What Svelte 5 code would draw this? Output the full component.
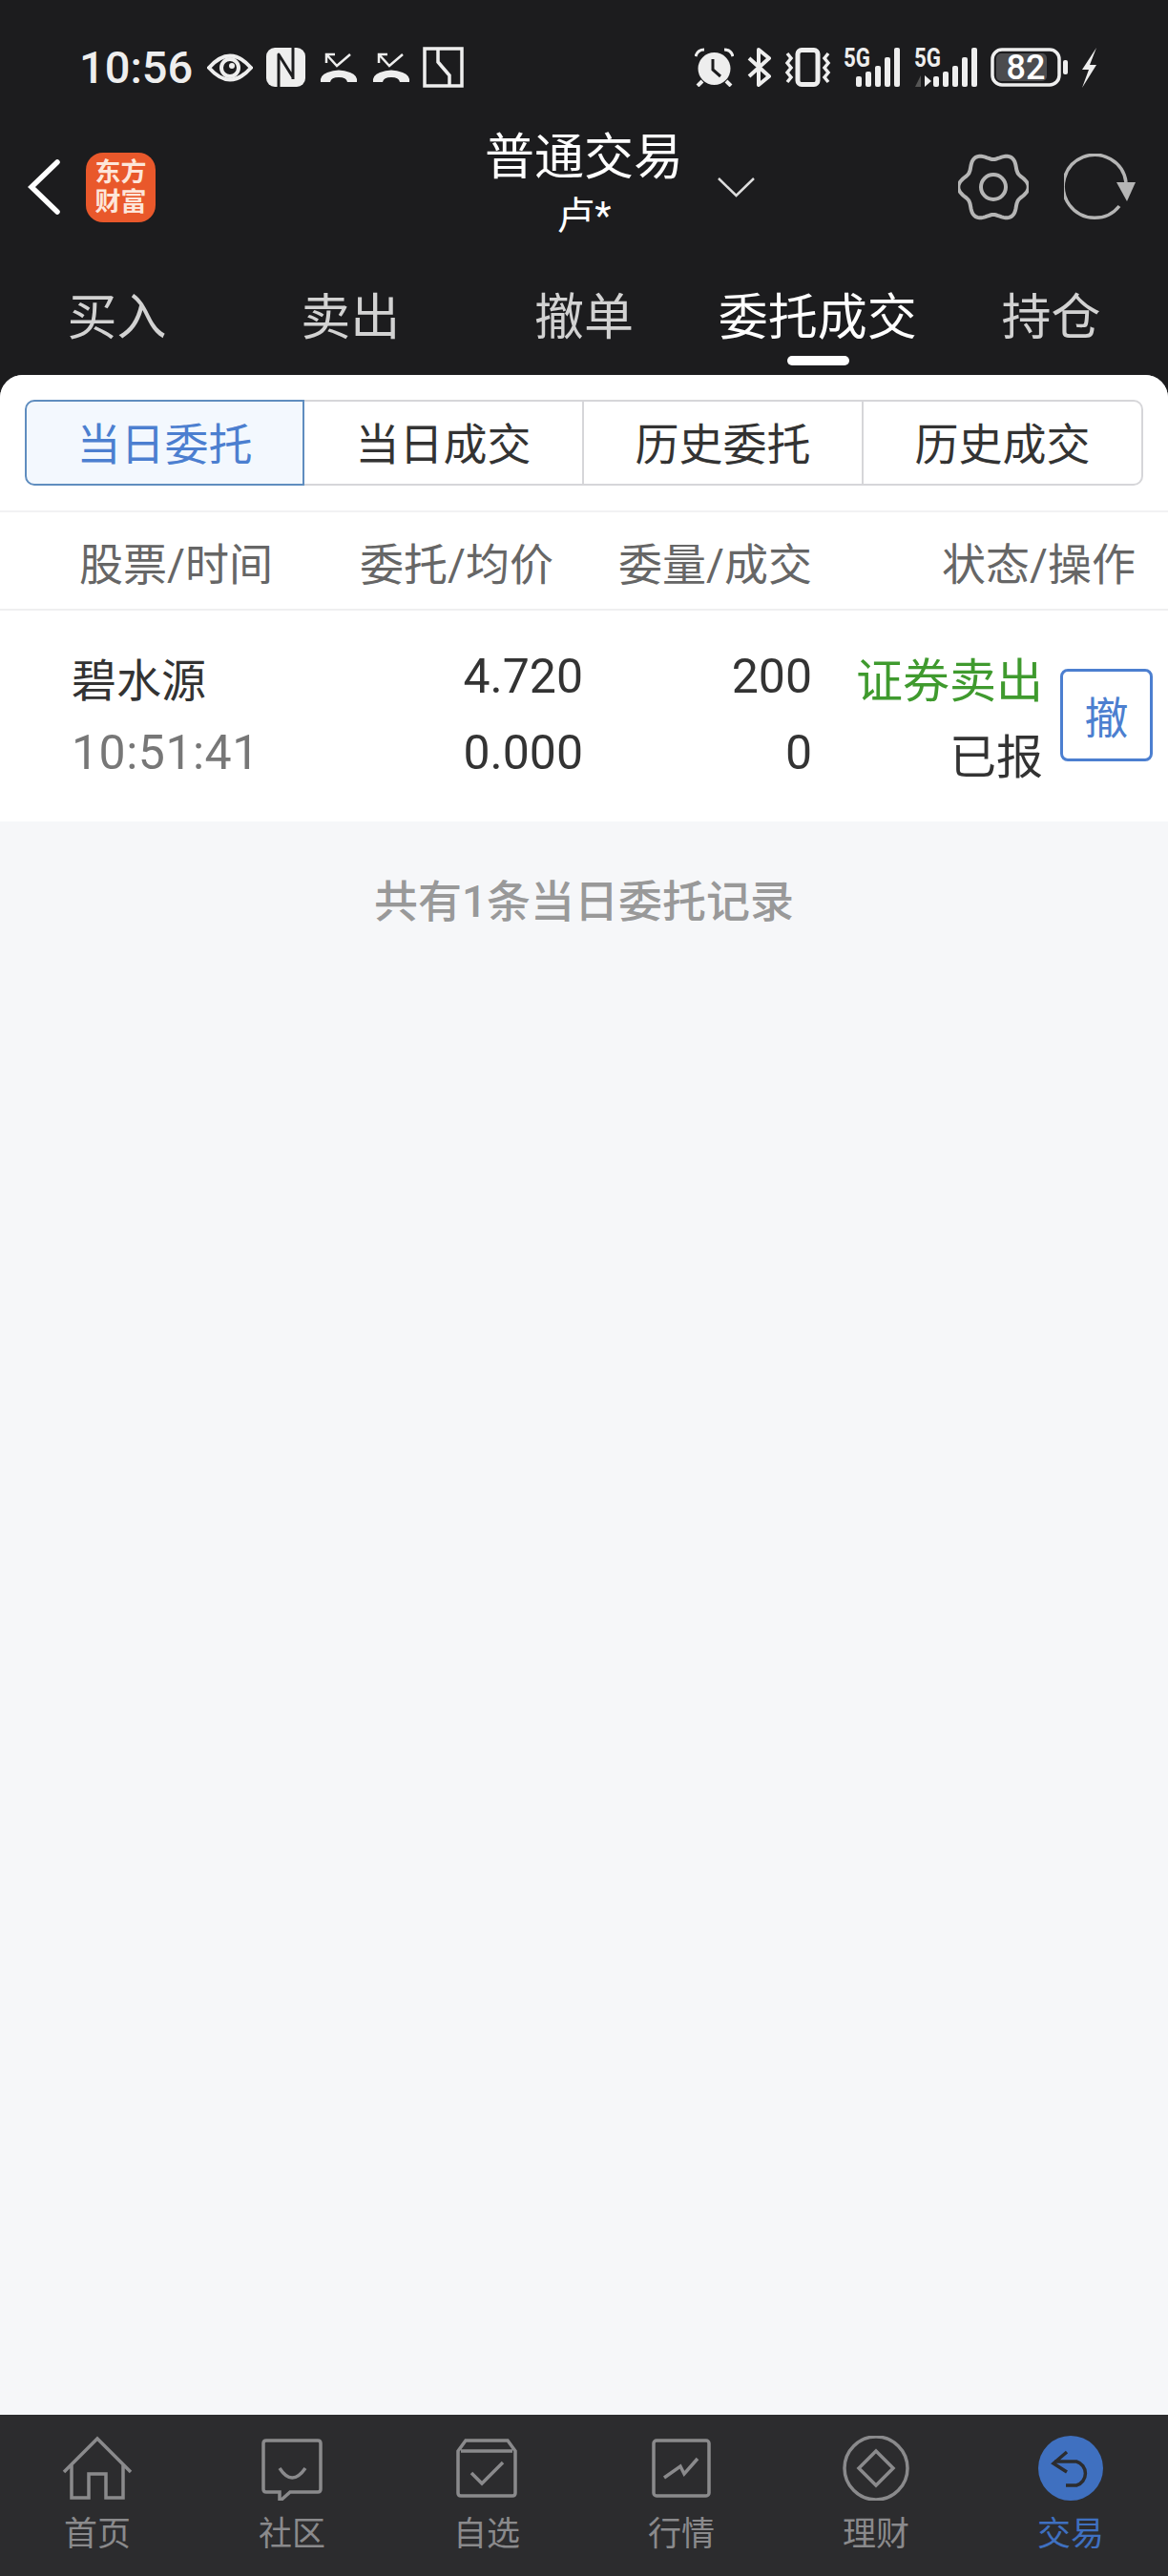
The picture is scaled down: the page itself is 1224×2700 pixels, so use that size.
<script>
	const tabs = ['买入', '卖出', '撤单', '委托成交', '持仓'];
	const segments = ['当日委托', '当日成交', '历史委托', '历史成交'];
	const columns = ['股票/时间', '委托/均价', '委量/成交', '状态/操作'];
	const orders = [
		{ name: '碧水源', time: '10:51:41', price: '4.720', avg: '0.000', qty: '200', done: '0', side: '证券卖出', status: '已报' }
	];
	const nav = ['首页', '社区', '自选', '行情', '理财', '交易'];

	// six lobed outline for the settings icon
	function gearPath() {
		let d = '';
		for (let i = 0; i <= 120; i++) {
			const a = (i / 120) * Math.PI * 2;
			const r = 32.5 + 3.5 * Math.cos(6 * a - Math.PI);
			const x = 37 + r * 1.02 * Math.sin(a);
			const y = 35 - r * Math.cos(a);
			d += (i ? 'L' : 'M') + x.toFixed(1) + ' ' + y.toFixed(1);
		}
		return d + 'Z';
	}
	const bars = [
		[16, 11],
		[26, 16],
		[36, 22],
		[46, 31],
		[56, 41]
	];
</script>

<div class="app">
	<header class="top">
		<div class="status">
			<div class="status-left">
				<span class="clock">10:56</span>
				<svg class="ic-eye" width="48" height="32" viewBox="0 0 48 32">
					<path d="M2 16Q24-9 46 16 24 41 2 16Z" fill="none" stroke="#eee" stroke-width="4" />
					<circle cx="24" cy="16" r="9" fill="none" stroke="#eee" stroke-width="4" />
					<circle cx="26" cy="14" r="3" fill="#eee" />
				</svg>
				<svg class="ic-nfc" width="41" height="41" viewBox="0 0 41 41">
					<rect width="41" height="41" rx="9" fill="#eee" />
					<path d="M13 41V7L28 31M28 0V33" fill="none" stroke="#1c1c1e" stroke-width="3" stroke-linejoin="round" />
				</svg>
				{#each [0, 1] as i}
					<svg class="ic-call" width="40" height="32" viewBox="0 0 40 32">
						<path d="M16 2H7V11M7 2L18 14 32 2" fill="none" stroke="#eee" stroke-width="2.500" />
						<path d="M1 31Q0 24 8 21 20 16 32 21 40 24 39 31L29 31Q28 26 20 26 12 26 11 31Z" fill="#eee" />
					</svg>
				{/each}
				<svg class="ic-box" width="43" height="43" viewBox="0 0 43 43">
					<path d="M2 2H41V41H2ZM16 2V16L28 30V41" fill="none" stroke="#eee" stroke-width="3.500" />
				</svg>
			</div>
			<div class="status-right">
				<svg width="41" height="41" viewBox="0 0 41 41">
					<circle cx="20.500" cy="22" r="17" fill="#eee" />
					<path d="M19 12V23L27 30" fill="none" stroke="#1c1c1e" stroke-width="3" />
					<path d="M1 9Q3 2 10 2M40 9Q38 2 31 2" fill="none" stroke="#eee" stroke-width="3" />
					<path d="M8 35L3 40M33 35L38 40" stroke="#eee" stroke-width="4" />
				</svg>
				<svg width="27" height="41" viewBox="0 0 27 41">
					<path d="M3 11L24 30 13 39V2L24 11 3 30" fill="none" stroke="#eee" stroke-width="4" stroke-linejoin="round" />
				</svg>
				<svg width="49" height="41" viewBox="0 0 49 41">
					<rect x="14" y="2.500" width="21" height="36" rx="4" fill="none" stroke="#eee" stroke-width="5" />
					<path d="M3 6L7 11 3 16 7 21 3 26 7 31 3 36M46 6L42 11 46 16 42 21 46 26 42 31 46 36" fill="none" stroke="#eee" stroke-width="3.500" />
				</svg>
				<svg class="open" width="61" height="41" viewBox="0 0 61 41">
					<text class="net" x="0" y="20" textLength="28" lengthAdjust="spacingAndGlyphs">5G</text>
					{#each bars as b}
						<rect x={b[0] - 3} y={41 - b[1]} width="6" height={b[1]} rx="2" fill="#eee" />
					{/each}
				</svg>
				<svg class="open" width="67" height="41" viewBox="0 0 67 41">
					<text class="net" x="0" y="20" textLength="28" lengthAdjust="spacingAndGlyphs">5G</text>
					<path d="M7 29V41H1Z" fill="#555" />
					<path d="M11 29V41L18 35Z" fill="#eee" />
					{#each bars as b}
						<rect x={b[0] + 4} y={41 - b[1]} width="6" height={b[1]} rx="2" fill="#eee" />
					{/each}
				</svg>
				<svg width="82" height="41" viewBox="0 0 82 41">
					<rect x="6" y="6" width="53" height="29" rx="5" fill="#4c4c4e" />
					<rect x="2" y="2" width="70" height="37" rx="10" fill="none" stroke="#eee" stroke-width="3.500" />
					<rect x="76" y="13" width="5" height="15" rx="2" fill="#eee" />
					<text class="batt" x="37" y="33" text-anchor="middle">82</text>
				</svg>
				<svg width="17" height="42" viewBox="0 0 17 42">
					<path d="M16 0L1 23H8L1 42 16 18H9Z" fill="#eee" />
				</svg>
			</div>
		</div>

		<div class="bar">
			<div class="bar-left">
				<svg width="34" height="58" viewBox="0 0 34 58">
					<path d="M31 3L4 29 31 55" fill="none" stroke="#fff" stroke-width="5.500" stroke-linecap="round" />
				</svg>
				<div class="logo">东方<br />财富</div>
			</div>
			<div class="title">
				<div class="title-main">普通交易</div>
				<div class="title-sub">卢*</div>
			</div>
			<div class="bar-right">
				<svg class="chev" width="39" height="22" viewBox="0 0 39 22">
					<path d="M1 2L19.500 20 38 2" fill="none" stroke="#ddd" stroke-width="2.500" />
				</svg>
				<svg class="gear" width="74" height="70" viewBox="0 0 74 70">
					<path d={gearPath()} fill="none" stroke="#b5b5b5" stroke-width="4" />
					<circle cx="37" cy="35" r="13" fill="none" stroke="#b5b5b5" stroke-width="4" />
				</svg>
				<svg width="76" height="70" viewBox="0 0 76 70">
					<path d="M65 30A33 33 0 1 0 58 55" fill="none" stroke="#b5b5b5" stroke-width="3.500" />
					<path d="M55 30H75L66 50Z" fill="#b5b5b5" />
				</svg>
			</div>
		</div>

		<nav class="tabs">
			{#each tabs as tab, i}
				<div class="tab" class:on={i === 3}>{tab}</div>
			{/each}
		</nav>
	</header>

	<main class="body">
		<section class="card">
			<div class="segments">
				{#each segments as seg, i}
					<div class="seg" class:on={i === 0}>{seg}</div>
				{/each}
			</div>
			<div class="head">
				{#each columns as col}
					<span>{col}</span>
				{/each}
			</div>
			{#each orders as o}
				<div class="row">
					<span class="name">{o.name}</span>
					<span class="num">{o.price}</span>
					<span class="num">{o.qty}</span>
					<span class="side">{o.side}</span>
					<button class="cancel">撤</button>
					<span class="time">{o.time}</span>
					<span class="num">{o.avg}</span>
					<span class="num">{o.done}</span>
					<span class="state">{o.status}</span>
				</div>
			{/each}
		</section>
		<p class="count">共有1条当日委托记录</p>
	</main>

	<footer class="nav">
		{#each nav as item, i}
			<div class="nav-item" class:on={i === 5}>
				<svg width="80" height="68" viewBox="0 0 80 68">
					{#if i === 0}
						<path d="M5 38L40 3 75 38M13 30V65H31V40H49V65H67V30" class="ln" />
					{:else if i === 1}
						<path d="M13 5H67Q70 5 70 8V56Q70 59 67 59H38L29 67H27V59H13Q10 59 10 56V8Q10 5 13 5Z" class="ln" />
						<path d="M27 34Q40 54 54 34" class="ln" />
					{:else if i === 2}
						<path d="M13 16H67M18 5H62L70 16V60Q70 63 67 63H13Q10 63 10 60V16ZM24 39L35 50 57 28" class="ln" />
					{:else if i === 3}
						<rect x="11" y="5" width="58" height="58" rx="3" class="ln" />
						<path d="M22 44L39 32 43 40 57 24" class="ln" />
					{:else if i === 4}
						<circle cx="40" cy="34" r="33" class="ln" />
						<path d="M40 16L58 34 40 52 22 34Z" class="ln" />
					{:else}
						<circle cx="40" cy="34" r="34" fill="#3f70c0" />
						<path d="M36 17L22 29 36 38M23 27H46A13 13 0 0 1 46 52H35" fill="none" stroke="#2c2c2e" stroke-width="3.500" />
					{/if}
				</svg>
				<span>{item}</span>
			</div>
		{/each}
	</footer>
</div>

<style>
	:global(body) {
		margin: 0;
	}

	.app {
		width: 1224px;
		height: 2700px;
		display: flex;
		flex-direction: column;
		background: #1c1c1e;
		font-family: Roboto, 'Noto Sans CJK SC', sans-serif;
		overflow: hidden;
	}

	.top {
		flex-shrink: 0;
		height: 393px;
		color: #fff;
	}

	.status {
		height: 43px;
		padding: 49px 74px 43px 83px;
		display: flex;
		align-items: center;
		justify-content: space-between;
	}

	.status-left,
	.status-right {
		display: flex;
		align-items: center;
	}

	.status-right {
		gap: 13px;
	}

	.open {
		overflow: visible;
	}

	.clock {
		width: 118px;
		font-size: 47px;
		font-weight: 500;
		line-height: 43px;
		color: #eee;
		white-space: nowrap;
	}

	.ic-eye {
		margin-left: 16px;
	}

	.ic-nfc {
		margin-left: 14px;
	}

	.ic-call {
		margin-left: 15px;
	}

	.ic-box {
		margin-left: 13px;
	}

	.net {
		font-size: 27px;
		font-weight: 700;
		fill: #eee;
	}

	.batt {
		font-size: 36px;
		font-weight: 500;
		fill: #fff;
	}

	.bar {
		height: 122px;
		display: grid;
		grid-template-columns: 1fr auto 1fr;
		align-items: center;
	}

	.bar-left {
		display: flex;
		align-items: center;
		gap: 27px;
		padding-left: 29px;
	}

	.logo {
		width: 73px;
		height: 73px;
		border-radius: 18px;
		background: #e9582b;
		color: #fde6da;
		font-size: 27px;
		font-weight: 700;
		line-height: 31px;
		text-align: center;
		padding-top: 6px;
		box-sizing: border-box;
		white-space: nowrap;
	}

	.title {
		text-align: center;
	}

	.title-main {
		font-size: 52px;
		line-height: 62px;
	}

	.title-sub {
		font-size: 40px;
		line-height: 60px;
	}

	.bar-right {
		display: flex;
		align-items: center;
		padding-right: 33px;
	}

	.chev {
		margin-left: 36px;
		margin-right: auto;
	}

	.gear {
		margin-right: 37px;
	}

	.tabs {
		display: flex;
		height: 136px;
	}

	.tab {
		flex: 1;
		position: relative;
		padding-top: 48px;
		text-align: center;
		font-size: 52px;
		line-height: 58px;
		color: #d2d2d2;
	}

	.tab.on {
		color: #fff;
	}

	.tab.on::after {
		content: '';
		position: absolute;
		left: 50%;
		top: 116px;
		width: 65px;
		height: 10px;
		margin-left: -32px;
		border-radius: 5px;
		background: #fff;
	}

	.body {
		flex: 1;
		background: #f6f7f9;
		border-radius: 24px 24px 0 0;
		overflow: hidden;
	}

	.card {
		background: #fff;
	}

	.segments {
		display: grid;
		grid-template-columns: repeat(4, 1fr);
		margin: 0 26px 0 26px;
		padding-top: 26px;
		padding-bottom: 26px;
	}

	.seg {
		height: 90px;
		box-sizing: border-box;
		border: 2px solid #d6d6d9;
		border-left-width: 0;
		font-size: 46px;
		line-height: 90px;
		text-align: center;
		color: #333;
	}

	.seg:last-child {
		border-radius: 0 10px 10px 0;
	}

	.seg.on {
		border: 2px solid #5f8dbf;
		border-radius: 10px 0 0 10px;
		background: #f3f8fe;
		color: #4c7fd0;
	}

	.head {
		height: 105px;
		box-sizing: border-box;
		border-top: 2px solid #f2f2f3;
		border-bottom: 2px solid #efeff0;
		padding: 0 34px 0 83px;
		display: grid;
		grid-template-columns: 294px 201px 273px 1fr;
		align-items: center;
		font-size: 46px;
		color: #666;
	}

	.head span {
		white-space: nowrap;
	}

	.head span:nth-child(n + 3) {
		text-align: right;
	}

	.row {
		height: 221px;
		box-sizing: border-box;
		padding: 29px 16px 0 75px;
		display: grid;
		grid-template-columns: 300px 236px 240px 242px 115px;
		grid-auto-rows: 80px;
		align-items: center;
		font-size: 50px;
		color: #333;
	}

	.name {
		font-size: 47px;
	}

	.time {
		color: #777;
		letter-spacing: 0.5px;
	}

	.num {
		text-align: right;
	}

	.side,
	.state {
		font-size: 49px;
		text-align: right;
		white-space: nowrap;
	}

	.side {
		color: #3f9a2e;
	}

	.cancel {
		grid-column: 5;
		grid-row: 1 / span 2;
		justify-self: end;
		width: 97px;
		height: 97px;
		padding: 0;
		box-sizing: border-box;
		background: #fff;
		border: 3px solid #4c7fd0;
		border-radius: 8px;
		font: inherit;
		font-size: 46px;
		color: #4c7fd0;
	}

	.count {
		margin: 53px 0 0;
		text-align: center;
		font-size: 46px;
		line-height: 62px;
		font-weight: 500;
		color: #999;
	}

	.nav {
		flex-shrink: 0;
		height: 169px;
		box-sizing: border-box;
		padding-top: 22px;
		background: #2c2c2e;
		display: grid;
		grid-template-columns: repeat(6, 1fr);
	}

	.nav-item {
		display: flex;
		flex-direction: column;
		align-items: center;
		color: #8a8a8c;
		font-size: 35px;
		line-height: 44px;
	}

	.nav-item span {
		margin-top: 14px;
	}

	.nav-item.on {
		color: #3f70c0;
	}

	.ln {
		fill: none;
		stroke: #8a8a8c;
		stroke-width: 3.5;
	}
</style>
